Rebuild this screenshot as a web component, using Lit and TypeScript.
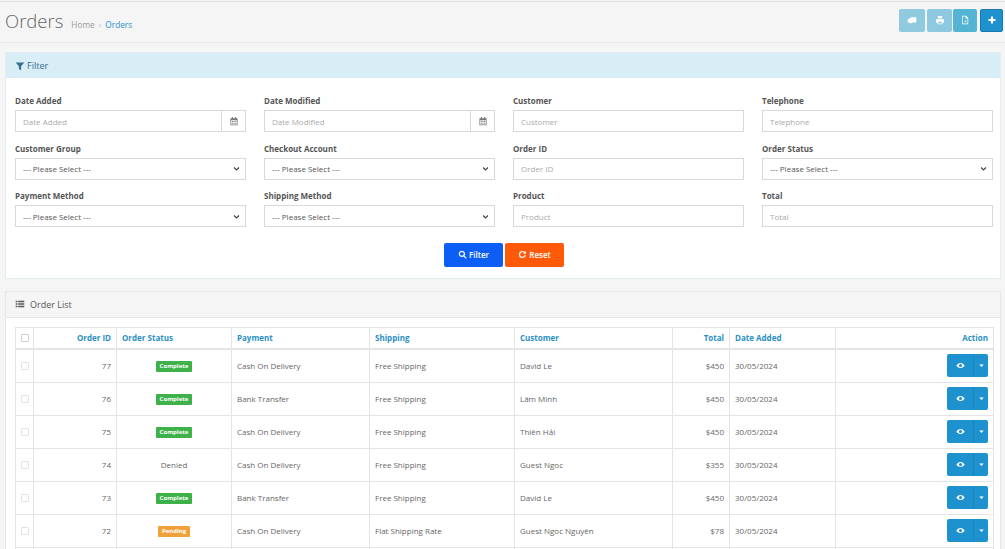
import { LitElement, html, css, svg } from "lit";
import { customElement } from "lit/decorators.js";

const icons: Record<string, any> = {
  filter: svg`<path d="M1 2h12L8.5 7.5V13l-3-1.8V7.5z"/>`,
  cal: svg`<path fill-rule="evenodd" d="M2 3h2V1.5h1.5V3h3V1.5H10V3h2v10H2zM3 6v6h8V6z"/><path d="M4 7h1.5v1.5H4zM6.3 7h1.5v1.5H6.3zM8.6 7h1.5v1.5H8.6zM4 9.5h1.5V11H4zM6.3 9.5h1.5V11H6.3zM8.6 9.5h1.5V11H8.6z"/>`,
  search: svg`<path fill-rule="evenodd" d="M6 1a5 5 0 0 1 4 8l3.4 3.4-1.3 1.3L8.7 10.300A5 5 0 1 1 6 1zm0 2a3 3 0 1 0 0 6 3 3 0 0 0 0-6z"/>`,
  reset: svg`<path d="M7 1.500a5.500 5.500 0 0 1 3.800 1.500L12.300 1.500V6H7.800l1.600-1.600A3.500 3.500 0 1 0 10.300 8.200h2.100A5.500 5.500 0 1 1 7 1.500z"/>`,
  list: svg`<path d="M1 2.500h2.500v2H1zM4.500 2.500H13v2H4.500zM1 6h2.500v2H1zM4.500 6H13v2H4.500zM1 9.500h2.500v2H1zM4.500 9.500H13v2H4.500z"/>`,
  eye: svg`<path fill-rule="evenodd" d="M7 3c3 0 5.300 2 6.500 4-1.200 2-3.500 4-6.500 4S1.700 9 .5 7C1.700 5 4 3 7 3zm0 1.500a2.500 2.500 0 1 0 0 5 2.500 2.500 0 0 0 0-5z"/>`,
  caret: svg`<path d="M3.500 5.500h7L7 9.500z"/>`,
  truck: svg`<path d="M5 3h8v7.500H6.500a1.500 1.500 0 0 1-3 0H1V7.500L3 5h2z"/>`,
  print: svg`<path fill-rule="evenodd" d="M4 1.500h6V5H4zM1.500 6h11v5H10.500v2h-7v-2H1.500zM4.500 9.500v2.500h5V9.500z"/>`,
  pdf: svg`<path fill-rule="evenodd" d="M3 1h5.500L11.500 4v9H3zM4 2v10h6.500V5H7.800V2z"/><path d="M5 10.500c1.500-.5 2.500-2.500 2.300-4 .5 1.500 1 2.500 2.200 3-1.500 0-3 .3-4.500 1z"/>`,
  plus: svg`<path d="M5.500 2h3v3.500H12v3H8.500V12h-3V8.500H2v-3h3.500z"/>`,
};
const ico = (n: string, cls = "") =>
  html`<svg class="ico ${cls}" viewBox="0 0 14 14" fill="currentColor">${icons[n]}</svg>`;

type Field = { label: string; type: "date" | "select" | "text" };
const fields: Field[] = [
  { label: "Date Added", type: "date" },
  { label: "Date Modified", type: "date" },
  { label: "Customer", type: "text" },
  { label: "Telephone", type: "text" },
  { label: "Customer Group", type: "select" },
  { label: "Checkout Account", type: "select" },
  { label: "Order ID", type: "text" },
  { label: "Order Status", type: "select" },
  { label: "Payment Method", type: "select" },
  { label: "Shipping Method", type: "select" },
  { label: "Product", type: "text" },
  { label: "Total", type: "text" },
];

const rows = [
  ["77", "Complete", "Cash On Delivery", "Free Shipping", "David Le", "$450", "30/05/2024"],
  ["76", "Complete", "Bank Transfer", "Free Shipping", "Lâm Minh", "$450", "30/05/2024"],
  ["75", "Complete", "Cash On Delivery", "Free Shipping", "Thiên Hải", "$450", "30/05/2024"],
  ["74", "Denied", "Cash On Delivery", "Free Shipping", "Guest Ngoc", "$355", "30/05/2024"],
  ["73", "Complete", "Bank Transfer", "Free Shipping", "David Le", "$450", "30/05/2024"],
  ["72", "Pending", "Cash On Delivery", "Flat Shipping Rate", "Guest Ngoc Nguyên", "$78", "30/05/2024"],
];

@customElement("app-root")
export class AppRoot extends LitElement {
  static styles = css`
    :host {
      display: block;
      height: 100vh;
      overflow: hidden;
      background: #f5f5f5;
      font-family: "Open Sans", sans-serif;
      font-size: 8px;
      color: #666;
    }
    * { box-sizing: border-box; }
    .ico { width: 10px; height: 10px; flex: none; display: block; }
    .top {
      margin-top: 1px;
      height: 42px;
      border-top: 1px solid #ddd;
      border-bottom: 1px solid #e8e8e8;
      display: flex;
      align-items: center;
      justify-content: space-between;
      padding: 0 2px 1px 5px;
    }
    .title { display: flex; align-items: baseline; margin-top: -1px; }
    h1 { margin: 0; font-size: 18.500px; font-weight: 300; color: #666; line-height: 26px; }
    .crumbs { margin-left: 8px; font-size: 8.300px; color: #999; display: flex; gap: 4px; }
    .crumbs b { font-weight: 400; color: #2a93c9; }
    .crumbs i { font-style: normal; color: #bbb; }
    .tools { display: flex; gap: 2px; margin-bottom: 3px; }
    .tool {
      height: 23px; border-radius: 2px; color: #fff;
      display: flex; align-items: center; justify-content: center;
    }
    .tool.a { width: 26px; background: #8fcadf; }
    .tool.b { width: 25px; background: #8dc9df; }
    .tool.c { width: 24px; margin-left: -1px; margin-right: 1px; background: #55b4d4; }
    .tool.d { width: 23px; background: #1e91cf; border: 1px solid #1978ab; }
    .panel { margin: 9px 4px 0 5px; border: 1px solid #e3ecef; background: #fff; }
    .p-head {
      height: 25px; display: flex; align-items: center; gap: 2px;
      padding: 0 9px; font-size: 9px; color: #31708f; background: #d9edf7;
    }
    .p-body { padding: 15px 9px 11px; }
    .grid { display: grid; grid-template-columns: repeat(4, 231px); column-gap: 18px; }
    .field { height: 47.500px; display: flex; flex-direction: column; }
    label { font-weight: 700; font-size: 8px; line-height: 11px; color: #555; margin-bottom: 4px; padding-top: 2px; }
    .box {
      height: 22px; border: 1px solid #d9d9d9; background: #fff; display: flex; align-items: center;
      padding-left: 7px; font-size: 8px; color: #aaa;
    }
    .box.sel { color: #555; justify-content: space-between; padding-right: 5px; }
    .chev { width: 7px; height: 7px; }
    .box .addon {
      margin-left: auto; width: 24px; height: 100%; border-left: 1px solid #d9d9d9;
      display: flex; align-items: center; justify-content: center; color: #777;
    }
    .actions { display: flex; justify-content: center; gap: 2px; margin-top: 7px; padding-left: 2px; }
    .btn {
      width: 59px; height: 24px; border-radius: 2px; color: #fff; font-weight: 600; font-size: 8px;
      display: flex; align-items: center; justify-content: center; gap: 2px;
    }
    .btn .ico { width: 9px; height: 9px; }
    .btn.f { background: #0d5ef5; }
    .btn.r { background: #ff5a0a; }
    .list { margin-top: 12px; border-color: #e6e6e6; }
    .list .p-head { height: 26px; background: #f5f5f5; color: #555; border-bottom: 1px solid #e6e6e6; gap: 5px; }
    .t-wrap { padding: 9px 9px 0; }
    table { border-collapse: collapse; table-layout: fixed; width: 978px; }
    td, th { border: 1px solid #e4e4e4; padding: 0 5px; font-size: 8px; }
    th { height: 22px; font-weight: 700; color: #2a8fc4; text-align: left; border-bottom: 2px solid #e4e4e4; }
    td { height: 33px; color: #666; }
    .r { text-align: right; }
    .c { text-align: center; }
    .chk { display: block; width: 8px; height: 8px; border: 1px solid #e2e2e2; background: #fff; margin: 0 auto; border-radius: 1px; }
    .chk.h { border-color: #d0d0d0; }
    .badge {
      display: inline-block; color: #fff; font-size: 6px; font-weight: 700; line-height: 11px;
      padding: 0 3.500px; border-radius: 1px; vertical-align: middle; margin-top: 2px;
    }
    .badge.Complete { background: #3fb14a; }
    .badge.Pending { background: #f0a13c; }
    .split { display: inline-flex; height: 23px; border-radius: 2px; overflow: hidden; color: #fff; vertical-align: middle; }
    .split span { background: #1e91cf; display: flex; align-items: center; justify-content: center; }
    .split .m { width: 26px; }
    .split .d { width: 15px; border-left: 1px solid #1b84bd; }
    .split .ico { width: 9px; height: 9px; }
  `;

  private field(f: Field) {
    let control;
    if (f.type === "select") {
      control = html`<div class="box sel">--- Please Select ---
        <svg class="chev" viewBox="0 0 10 10" fill="none" stroke="#444" stroke-width="1.800"><path d="M1.500 3.500 5 7l3.500-3.500"/></svg></div>`;
    } else if (f.type === "date") {
      control = html`<div class="box">${f.label}<span class="addon">${ico("cal")}</span></div>`;
    } else {
      control = html`<div class="box">${f.label}</div>`;
    }
    return html`<div class="field"><label>${f.label}</label>${control}</div>`;
  }

  render() {
    return html`
      <div class="top">
        <div class="title">
          <h1>Orders</h1>
          <div class="crumbs"><span>Home</span><i>›</i><b>Orders</b></div>
        </div>
        <div class="tools">
          <div class="tool a">${ico("truck")}</div>
          <div class="tool b">${ico("print")}</div>
          <div class="tool c">${ico("pdf")}</div>
          <div class="tool d">${ico("plus")}</div>
        </div>
      </div>
      <div class="panel">
        <div class="p-head">${ico("filter")}<span>Filter</span></div>
        <div class="p-body">
          <div class="grid">${fields.map((f) => this.field(f))}</div>
          <div class="actions">
            <div class="btn f">${ico("search")}Filter</div>
            <div class="btn r">${ico("reset")}Reset</div>
          </div>
        </div>
      </div>
      <div class="panel list">
        <div class="p-head">${ico("list")}<span>Order List</span></div>
        <div class="t-wrap">
          <table>
            <colgroup>
              <col style="width:18px" /><col style="width:83px" /><col style="width:115px" />
              <col style="width:138px" /><col style="width:145px" /><col style="width:158px" />
              <col style="width:57px" /><col style="width:106px" /><col style="width:158px" />
            </colgroup>
            <thead>
              <tr>
                <th class="c"><span class="chk h"></span></th>
                <th class="r">Order ID</th>
                <th>Order Status</th>
                <th>Payment</th>
                <th>Shipping</th>
                <th>Customer</th>
                <th class="r">Total</th>
                <th>Date Added</th>
                <th class="r">Action</th>
              </tr>
            </thead>
            <tbody>
              ${rows.map(
                (r) => html`<tr>
                  <td class="c"><span class="chk"></span></td>
                  <td class="r">${r[0]}</td>
                  <td class="c">${r[1] === "Denied" ? r[1] : html`<span class="badge ${r[1]}">${r[1]}</span>`}</td>
                  <td>${r[2]}</td>
                  <td>${r[3]}</td>
                  <td>${r[4]}</td>
                  <td class="r">${r[5]}</td>
                  <td>${r[6]}</td>
                  <td class="r"><span class="split"><span class="m">${ico("eye")}</span><span class="d">${ico("caret")}</span></span></td>
                </tr>`
              )}
              <tr>${[0, 1, 2, 3, 4, 5, 6, 7, 8].map(() => html`<td></td>`)}</tr>
            </tbody>
          </table>
        </div>
      </div>
    `;
  }
}
